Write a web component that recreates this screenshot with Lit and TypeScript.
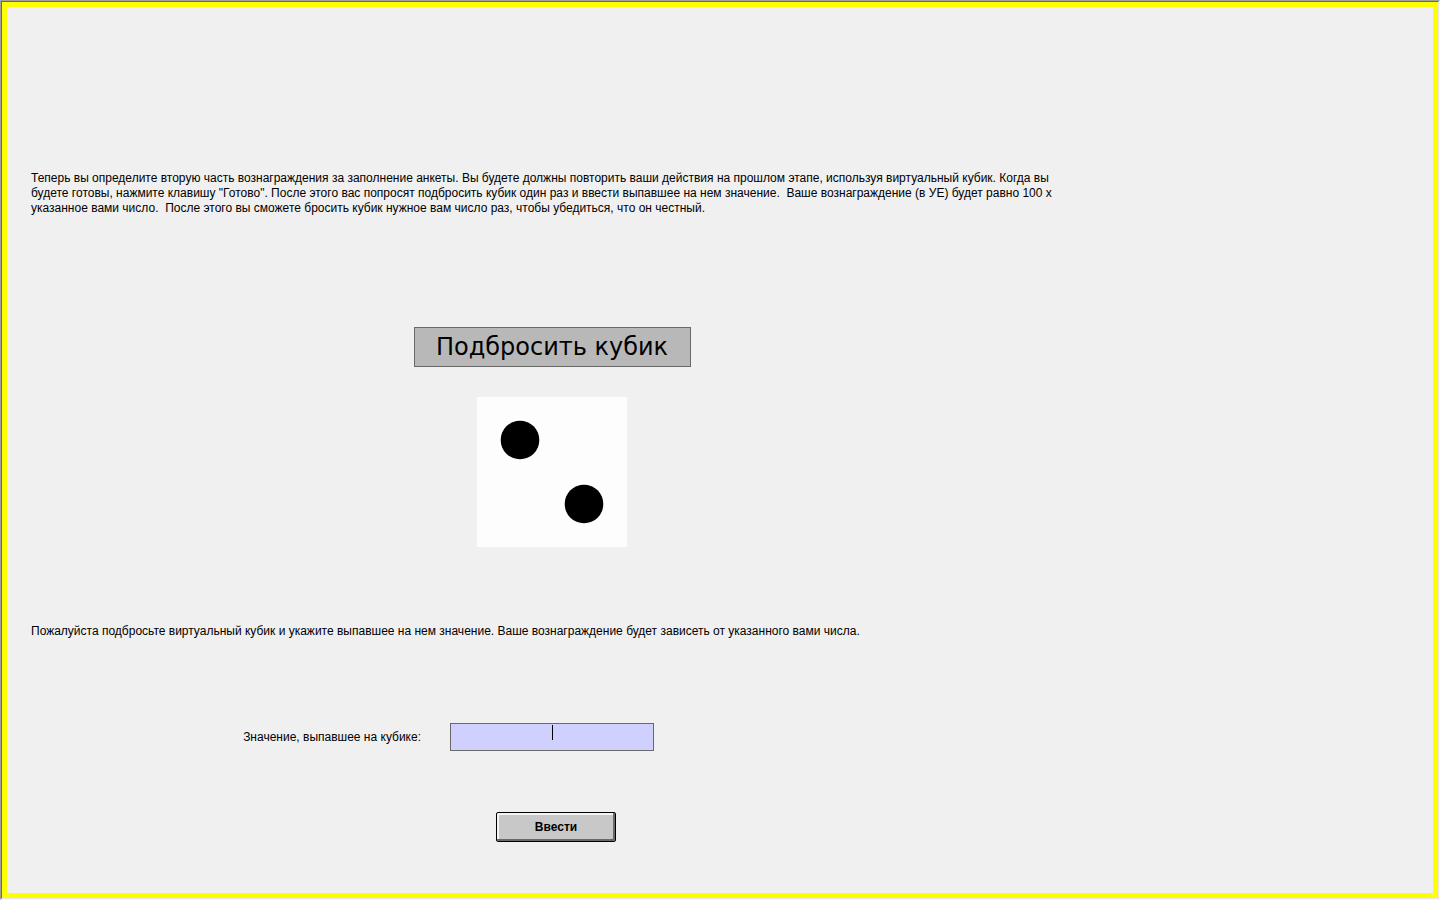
import { LitElement, html, css } from "lit";
import { customElement } from "lit/decorators.js";

@customElement("app-root")
export class AppRoot extends LitElement {
  static styles = css`
    :host {
      display: block;
      font-family: "Liberation Sans", Arial, sans-serif;
      font-size: 12px;
      line-height: 15px;
      color: #000;
    }
    * {
      box-sizing: border-box;
    }
    .window {
      min-height: 100vh;
      border: 1px solid;
      border-color: #a0a0a0 #f8f8f8 #f8f8f8 #a0a0a0;
      background: #f0f0f0;
    }
    .frame {
      min-height: calc(100vh - 2px);
      border: 1px solid;
      border-color: #696969 #e8e8e8 #e8e8e8 #696969;
    }
    .stage {
      min-height: calc(100vh - 4px);
      border: 5px solid #ffff00;
      padding: 164px 24px 48px;
    }
    .column {
      max-width: 1042px;
      display: flex;
      flex-direction: column;
      align-items: center;
    }
    p {
      margin: 0;
      width: 100%;
      white-space: pre-wrap;
    }
    button {
      padding: 0;
      color: #000;
    }
    .roll {
      margin-top: 111px;
      width: 277px;
      height: 40px;
      border: 1px solid #696969;
      background: #b8b8b8;
      font: 24px/38px "DejaVu Sans", Verdana, sans-serif;
    }
    .die {
      display: block;
      margin: 30px 0 77px;
      width: 150px;
      height: 150px;
    }
    .entry {
      width: 100%;
      display: flex;
      flex-direction: column;
      align-items: center;
    }
    .row {
      width: 100%;
      margin: 84px 0 61px;
      display: grid;
      grid-template-columns: 1fr 204px 1fr;
      align-items: center;
    }
    .row label {
      justify-self: end;
      padding-right: 29px;
    }
    .field {
      position: relative;
      height: 28px;
    }
    .field input {
      display: block;
      width: 100%;
      height: 100%;
      margin: 0;
      border: 1px solid #696969;
      border-radius: 0;
      outline: none;
      background: #d0d0ff;
      font: inherit;
      text-align: center;
    }
    .caret {
      position: absolute;
      top: 2px;
      left: 50%;
      width: 1px;
      height: 15px;
      background: #000;
    }
    .submit {
      margin-left: 8px;
      width: 120px;
      height: 30px;
      border: 1px solid #000;
      border-radius: 2px;
      background: #c8c8c8;
      box-shadow: inset -2px -2px #696969, inset 2px 2px #f4f4f4;
      font: bold 12px/15px "Liberation Sans", Arial, sans-serif;
    }
  `;

  render() {
    return html`
      <div class="window">
        <div class="frame">
          <main class="stage">
            <div class="column">
              <p>Теперь вы определите вторую часть вознаграждения за заполнение анкеты. Вы будете должны повторить ваши действия на прошлом этапе, используя виртуальный кубик. Когда вы будете готовы, нажмите клавишу "Готово". После этого вас попросят подбросить кубик один раз и ввести выпавшее на нем значение.  Ваше вознаграждение (в УЕ) будет равно 100 х указанное вами число.  После этого вы сможете бросить кубик нужное вам число раз, чтобы убедиться, что он честный.</p>
              <button class="roll" type="button">Подбросить кубик</button>
              <svg class="die" viewBox="0 0 150 150" role="img" aria-label="2">
                <rect width="150" height="150" fill="#fdfdfd" />
                <circle cx="43" cy="43" r="19.3" />
                <circle cx="107" cy="107" r="19.3" />
              </svg>
              <p>Пожалуйста подбросьте виртуальный кубик и укажите выпавшее на нем значение. Ваше вознаграждение будет зависеть от указанного вами числа.</p>
              <form class="entry" @submit=${(e: Event) => e.preventDefault()}>
                <div class="row">
                  <label for="value">Значение, выпавшее на кубике:</label>
                  <div class="field">
                    <input id="value" type="text" inputmode="numeric" autocomplete="off" />
                    <span class="caret"></span>
                  </div>
                </div>
                <button class="submit" type="submit">Ввести</button>
              </form>
            </div>
          </main>
        </div>
      </div>
    `;
  }
}
